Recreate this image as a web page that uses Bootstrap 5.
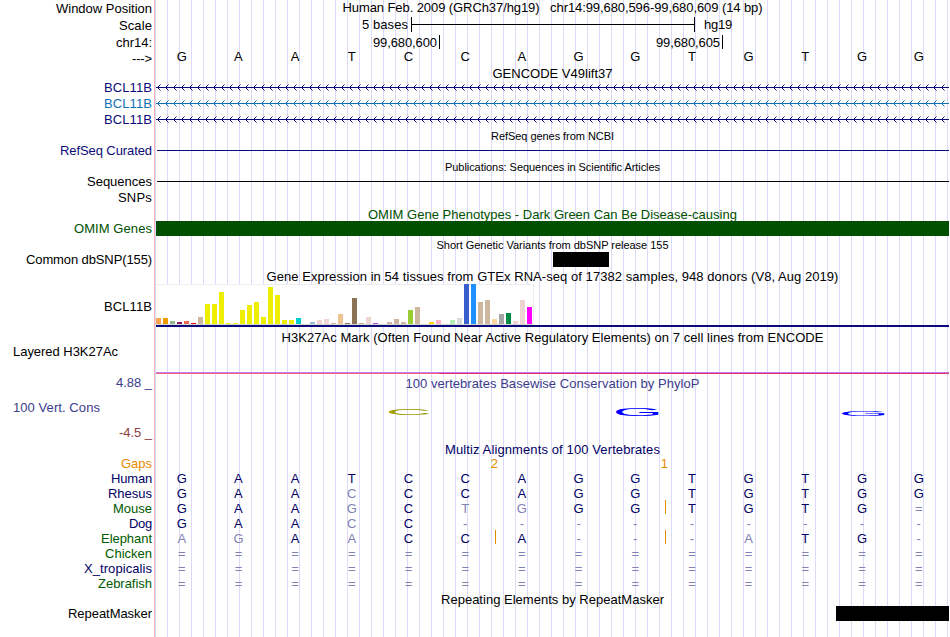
<!doctype html>
<html lang="en">

<head>
    <meta charset="UTF-8">
    <meta name="viewport" content="width=device-width, initial-scale=1">
    <title>Human chr14:99,680,596-99,680,609</title>
    <link href="https://cdn.jsdelivr.net/npm/bootstrap@5.3.3/dist/css/bootstrap.min.css" rel="stylesheet">
    <style>
        body {
            font-family: "Liberation Sans", Arial, sans-serif;
            font-size: 13px;
            line-height: 15px;
            color: #000;
            background: #fff;
            overflow: hidden;
        }

        /* pink divider, blank label column, then a guide line every 12px */
        .browser {
            width: 949px;
            height: 637px;
            background:
                linear-gradient(#ffb4b4, #ffb4b4) 154px 0 / 1px 100% no-repeat,
                linear-gradient(#fff, #fff) 0 0 / 155px 100% no-repeat,
                linear-gradient(to right, #dcdaf8 1px, transparent 1px) 167px 0 / 12px 100%;
        }

        .track { height: 16px; }
        .track-15 { height: 15px; }
        .track-14 { height: 14px; }
        .track-17 { height: 17px; }

        .side {
            width: 155px;
            padding-right: 3px;
            text-align: right;
            white-space: nowrap;
        }

        .plot {
            width: 794px;
            white-space: nowrap;
        }
        .plot.text-center { padding-left: 1px; }

        .small-title { font-size: 11px; }

        .dn-1 { padding-top: 1px; }
        .dn-2 { padding-top: 2px; }
        .dn-3 { padding-top: 3px; }

        .navy { color: #0c0c78; }
        .sky { color: #1270b4; }
        .omim { color: #005000; }
        .cons { color: #3c3c8c; }
        .negative { color: #8c3c3c; }
        .multiz { color: #000064; }
        .clade { color: #005a00; }
        .gaps { color: #e68a00; }

        .scale-text { width: 253px; margin-right: 3px; }
        .scale-bar {
            width: 284px;
            height: 15px;
            margin-right: 9px;
            border: solid #000;
            border-width: 0 1px;
            background: linear-gradient(#000, #000) 0 7px / 100% 1px no-repeat;
        }

        .coord {
            border-right: 1px solid #000;
            height: 14px;
            padding-right: 2px;
            text-align: right;
        }
        .coord-a { width: 285px; }
        .coord-b { width: 283px; }

        .rule {
            height: 1px;
            margin: 7px 0 0 2px;
            background: currentColor;
        }

        .solid { height: 15px; background: #000; }
        .solid-omim { margin-left: 1px; background: #005000; }
        .solid-snp { width: 56px; margin-left: 398px; }
        .solid-repeat { margin-left: 681px; }

        .gtex { height: 43px; }
        .gtex-label { padding-top: 15px; }
        .gtex-box {
            width: 378px;
            height: 41px;
            margin-left: 1px;
            gap: 2px;
            background: #fff;
            border: solid #eee;
            border-width: 1px 1px 1px 0;
            border-bottom-color: #d8d8d8;
        }
        .gtex-box div { width: 5px; flex: none; }
        .gtex-base { height: 2px; margin-left: 1px; background: #0c0c78; }

        .h3k { height: 30px; }
        .h3k-name { padding-left: 13px; text-align: left; }
        .h3k-lines {
            height: 2px;
            margin-left: 1px;
            background: #dc3264;
            border-top: 1px solid #c878f0;
        }
        .h3k-lines div { width: 283px; height: 1px; background: #f06482; }

        .phylo { height: 49px; }
        .phylo-name { padding: 9px 0 10px 13px; text-align: left; }

        .bases {
            display: grid;
            grid-template-columns: repeat(14, 56.69px);
            margin-left: -1.6px;
            text-align: center;
        }
        .bases .diff { color: #8282b4; }
        .insert { position: relative; }
        .insert::before {
            content: "";
            position: absolute;
            left: 1.6px;
            top: -1px;
            width: 1px;
            height: 14px;
            background: #e68a00;
        }
        .gap-first { width: 343px; }
        .gap-second { width: 170px; }
    </style>
</head>

<body>
    <div class="browser d-flex flex-column">
        <!-- position and scale -->
        <div class="track d-flex">
            <div class="side dn-1"><span data-w="96">Window Position</span></div>
            <div class="plot text-center"><span data-w="420">Human Feb. 2009 (GRCh37/hg19)&nbsp;&nbsp;&nbsp;chr14:99,680,596-99,680,609 (14 bp)</span></div>
        </div>
        <div class="track-17 d-flex">
            <div class="side dn-2"><span data-w="33">Scale</span></div>
            <div class="plot d-flex dn-1">
                <div class="scale-text text-end"><span data-w="46">5 bases</span></div>
                <div class="scale-bar"></div>
                <div><span data-w="28">hg19</span></div>
            </div>
        </div>
        <div class="track d-flex">
            <div class="side dn-2"><span data-w="36">chr14:</span></div>
            <div class="plot d-flex dn-2">
                <div class="coord coord-a"><span data-w="64">99,680,600</span></div>
                <div class="coord coord-b"><span data-w="64">99,680,605</span></div>
            </div>
        </div>
        <div class="track-17 d-flex">
            <div class="side dn-2"><span data-w="20">---&gt;</span></div>
            <div class="plot"><div class="bases" data-seq="GAATCCAGGTGTGG"></div></div>
        </div>

        <!-- gencode -->
        <div class="track-14 d-flex">
            <div class="side"></div>
            <div class="plot text-center"><span data-w="120">GENCODE V49lift37</span></div>
        </div>
        <div class="track d-flex navy">
            <div class="side"><span data-w="48">BCL11B</span></div>
            <svg class="plot strand" width="794" height="15"></svg>
        </div>
        <div class="track d-flex sky">
            <div class="side"><span data-w="48">BCL11B</span></div>
            <svg class="plot strand" width="794" height="15"></svg>
        </div>
        <div class="track d-flex navy">
            <div class="side"><span data-w="48">BCL11B</span></div>
            <svg class="plot strand" width="794" height="15"></svg>
        </div>

        <!-- refseq, publications -->
        <div class="track-15 d-flex">
            <div class="side"></div>
            <div class="plot text-center small-title dn-1"><span data-w="123">RefSeq genes from NCBI</span></div>
        </div>
        <div class="track d-flex navy">
            <div class="side"><span data-w="92">RefSeq Curated</span></div>
            <div class="plot"><div class="rule"></div></div>
        </div>
        <div class="track-15 d-flex">
            <div class="side"></div>
            <div class="plot text-center small-title dn-1"><span data-w="215">Publications: Sequences in Scientific Articles</span></div>
        </div>
        <div class="track d-flex">
            <div class="side"><span data-w="65">Sequences</span></div>
            <div class="plot"><div class="rule"></div></div>
        </div>
        <div class="track d-flex">
            <div class="side"><span data-w="34">SNPs</span></div>
            <div class="plot"></div>
        </div>

        <!-- omim -->
        <div class="track-15 d-flex omim">
            <div class="side"></div>
            <div class="plot text-center dn-1"><span data-w="369">OMIM Gene Phenotypes - Dark Green Can Be Disease-causing</span></div>
        </div>
        <div class="track-15 d-flex omim">
            <div class="side"><span data-w="78">OMIM Genes</span></div>
            <div class="plot"><div class="solid solid-omim"></div></div>
        </div>

        <!-- dbsnp -->
        <div class="track d-flex">
            <div class="side"></div>
            <div class="plot text-center small-title dn-2"><span data-w="232">Short Genetic Variants from dbSNP release 155</span></div>
        </div>
        <div class="track-15 d-flex">
            <div class="side"><span data-w="126">Common dbSNP(155)</span></div>
            <div class="plot"><div class="solid solid-snp"></div></div>
        </div>

        <!-- gtex -->
        <div class="track-17 d-flex">
            <div class="side"></div>
            <div class="plot text-center dn-2"><span data-w="572">Gene Expression in 54 tissues from GTEx RNA-seq of 17382 samples, 948 donors (V8, Aug 2019)</span></div>
        </div>
        <div class="gtex d-flex">
            <div class="side gtex-label"><span data-w="48">BCL11B</span></div>
            <div class="plot">
                <div class="gtex-box d-flex align-items-end" id="gtex"></div>
                <div class="gtex-base"></div>
            </div>
        </div>

        <!-- h3k27ac -->
        <div class="track-17 d-flex">
            <div class="side"></div>
            <div class="plot text-center dn-3"><span data-w="542">H3K27Ac Mark (Often Found Near Active Regulatory Elements) on 7 cell lines from ENCODE</span></div>
        </div>
        <div class="h3k d-flex">
            <div class="side h3k-name"><span data-w="105">Layered H3K27Ac</span></div>
            <div class="plot d-flex flex-column justify-content-end">
                <div class="h3k-lines"><div></div></div>
            </div>
        </div>

        <!-- conservation -->
        <div class="track-17 d-flex cons">
            <div class="side dn-1"><span data-w="36">4.88 _</span></div>
            <div class="plot text-center dn-2"><span data-w="294">100 vertebrates Basewise Conservation by PhyloP</span></div>
        </div>
        <div class="phylo d-flex cons">
            <div class="side">
                <div class="phylo-name"><span data-w="87">100 Vert. Cons</span></div>
                <div class="negative"><span data-w="33">-4.5 _</span></div>
            </div>
            <svg class="plot" width="794" height="49" font-size="10">
                <text transform="translate(230.8 23.8) scale(6.4 .83)" fill="#a0a000">C</text>
                <text transform="translate(457.8 24.8) scale(6.45 1.03)" fill="#0000ff">G</text>
                <text transform="translate(683.8 24.8) scale(6.45 .78)" fill="#0000ff">G</text>
            </svg>
        </div>

        <!-- multiz -->
        <div class="track d-flex multiz">
            <div class="side"></div>
            <div class="plot text-center dn-2"><span data-w="215">Multiz Alignments of 100 Vertebrates</span></div>
        </div>
        <div class="track-15 d-flex gaps">
            <div class="side"><span data-w="31">Gaps</span></div>
            <div class="plot d-flex text-end">
                <div class="gap-first">2</div>
                <div class="gap-second">1</div>
            </div>
        </div>
        <div id="species"></div>

        <!-- repeatmasker -->
        <div class="track-15 d-flex">
            <div class="side"></div>
            <div class="plot text-center dn-1"><span data-w="223">Repeating Elements by RepeatMasker</span></div>
        </div>
        <div class="track-15 d-flex">
            <div class="side"><span data-w="84">RepeatMasker</span></div>
            <div class="plot"><div class="solid solid-repeat"></div></div>
        </div>
    </div>

    <script src="https://cdn.jsdelivr.net/npm/bootstrap@5.3.3/dist/js/bootstrap.bundle.min.js"></script>
    <script>
        const human = 'GAATCCAGGTGTGG';
        const species = [
            { name: 'Human', width: 41, cls: 'multiz', seq: 'GAATCCAGGTGTGG' },
            { name: 'Rhesus', width: 44, cls: 'multiz', seq: 'GAACCCAGGTGTGG' },
            { name: 'Mouse', width: 39, cls: 'clade', seq: 'GAAGCTGGGTGTG=', inserts: [9] },
            { name: 'Dog', width: 23, cls: 'multiz', seq: 'GAACC---------' },
            { name: 'Elephant', width: 51, cls: 'clade', seq: 'AGAACCA---ATG-', inserts: [6, 9] },
            { name: 'Chicken', width: 47, cls: 'clade', seq: '==============' },
            { name: 'X_tropicalis', width: 68, cls: 'multiz', seq: '==============' },
            { name: 'Zebrafish', width: 54, cls: 'clade', seq: '==============' }
        ];

        // Bases that differ from human get the lighter shade
        function baseCells(seq, inserts = []) {
            return [...seq].map((base, i) => {
                const cls = [];
                if (base !== human[i]) cls.push('diff');
                if (inserts.includes(i)) cls.push('insert');
                return `<div class="${cls.join(' ')}">${base}</div>`;
            }).join('');
        }

        document.querySelectorAll('[data-seq]').forEach(el => {
            el.innerHTML = baseCells(el.dataset.seq);
        });

        document.getElementById('species').innerHTML = species.map(s => `
            <div class="track-15 d-flex">
                <div class="side ${s.cls}"><span data-w="${s.width}">${s.name}</span></div>
                <div class="plot multiz"><div class="bases">${baseCells(s.seq, s.inserts)}</div></div>
            </div>`).join('');

        // GTEx tissues: [height, color]
        const tissues = [
            [6, '#ffa54f'], [6, '#ee9a00'], [3, '#8fbc8f'], [2, '#8b1c62'], [3, '#ee6a50'], [1, '#ff0000'],
            [7, '#cdb79e'], [20, '#eeee00'], [20, '#eeee00'], [32, '#eeee00'], [1, '#eeee00'], [1, '#eeee00'],
            [14, '#eeee00'], [19, '#eeee00'], [22, '#eeee00'], [7, '#eeee00'], [37, '#eeee00'], [29, '#eeee00'],
            [4, '#eeee00'], [4, '#eeee00'], [6, '#00cdcd'], [0, '#ee82ee'], [2, '#9ac0cd'], [4, '#eed5d2'],
            [5, '#eed5d2'], [1, '#cdb79e'], [10, '#eec591'], [1, '#8b7355'], [26, '#8b7355'], [1, '#cdaa7d'],
            [7, '#eed5d2'], [1, '#b452cd'], [0, '#7a378b'], [2, '#cdb79e'], [5, '#cdb79e'], [2, '#cdb79e'],
            [14, '#9acd32'], [17, '#cdb79e'], [0, '#7a67ee'], [2, '#ffd700'], [4, '#ffb6c1'], [0, '#cd9b1d'],
            [4, '#b4eeb4'], [6, '#d9d9d9'], [40, '#3a5fcd'], [40, '#1e90ff'], [22, '#cdb79e'], [24, '#cdb79e'],
            [5, '#ffd39b'], [10, '#a6a6a6'], [11, '#008b45'], [3, '#eed5d2'], [24, '#eed5d2'], [17, '#ff00ff']
        ];
        document.getElementById('gtex').innerHTML = tissues
            .map(([h, color]) => `<div style="height: ${h}px; background: ${color}"></div>`).join('');

        // Reverse strand arrows, one every 8px, with faded tips
        const dot = (x, y) => `M${x} ${y}h1v1h-1z`;
        document.querySelectorAll('.strand').forEach(svg => {
            let arms = '';
            let tips = '';
            for (let x = 2; x < 792; x += 8) {
                arms += dot(x + 1, 6) + dot(x + 1, 8) + dot(x + 2, 5) + dot(x + 2, 9);
                tips += dot(x + 3, 4) + dot(x + 3, 10);
            }
            svg.innerHTML = `<path d="M1 7h793v1H1z${arms}" fill="currentColor"/>
                <path d="${tips}" fill="currentColor" fill-opacity=".5"/>`;
        });

        // Track each text out or in to its own width
        document.querySelectorAll('[data-w]').forEach(el => {
            const diff = el.dataset.w - el.getBoundingClientRect().width;
            el.style.letterSpacing = `${diff / el.textContent.length}px`;
        });
    </script>
</body>

</html>
